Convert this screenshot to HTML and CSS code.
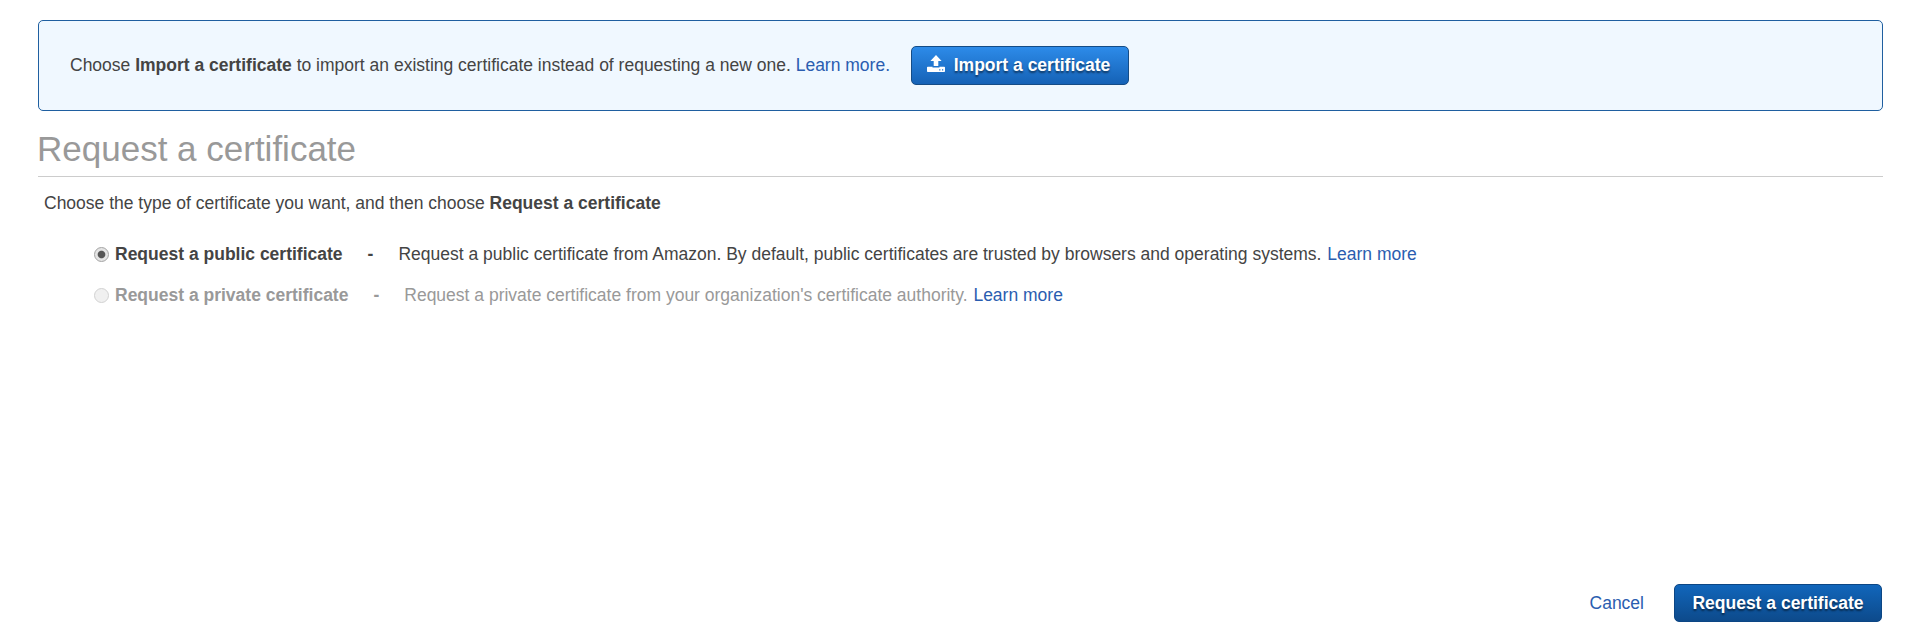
FILE: index.html
```html
<!DOCTYPE html>
<html lang="en">
<head>
<meta charset="utf-8">
<title>Request a certificate</title>
<link rel="stylesheet" href="styles.css">
</head>
<body>
<main class="page">
  <section class="notice">
    <p class="notice-text">Choose <b>Import a certificate</b> to import an existing certificate instead of requesting a new one. <a class="link" href="#">Learn more.</a></p>
    <button class="btn btn-import" type="button">
      <svg class="btn-icon" width="18" height="18" viewBox="0 0 18 18" aria-hidden="true">
        <path fill="#fff" d="M9 0L14.6 6H11.3V11H6.7V6H3.4Z"/>
        <path fill="#fff" fill-rule="evenodd" d="M.8 11.8H5.5V12.5H12.5V11.8H17.2Q18 11.8 18 12.6V16.2Q18 17 17.2 17H.8Q0 17 0 16.2V12.6Q0 11.8.8 11.8ZM12.2 14.3V15.5H13.4V14.3ZM15 14.3V15.5H16.2V14.3Z"/>
      </svg>
      <span>Import a certificate</span>
    </button>
  </section>
  <h1 class="title">Request a certificate</h1>
  <p class="intro">Choose the type of certificate you want, and then choose <b>Request a certificate</b></p>
  <div class="options">
    <div class="option">
      <span class="radio radio-on" role="radio" aria-checked="true"></span>
      <b class="option-name">Request a public certificate</b>
      <b class="dash">-</b>
      <span>Request a public certificate from Amazon. By default, public certificates are trusted by browsers and operating systems. <a class="link link-spaced" href="#">Learn more</a></span>
    </div>
    <div class="option option-disabled">
      <span class="radio radio-off" role="radio" aria-checked="false"></span>
      <b class="option-name">Request a private certificate</b>
      <b class="dash">-</b>
      <span>Request a private certificate from your organization's certificate authority. <a class="link link-spaced" href="#">Learn more</a></span>
    </div>
  </div>
  <footer class="actions">
    <a class="link" href="#">Cancel</a>
    <button class="btn btn-request" type="button">Request a certificate</button>
  </footer>
</main>
</body>
</html>
```
FILE: styles.css
```css
* { box-sizing: border-box; }
body {
  margin: 0;
  background: #fff;
  color: #444;
  font: 17.5px/25px "Liberation Sans", Arial, sans-serif;
}
.page {
  display: flex;
  flex-direction: column;
  height: 642px;
  padding: 20px 22px 20px 38px;
}
.link { color: #2a5db0; text-decoration: none; }
.notice {
  display: flex;
  align-items: center;
  gap: 21px;
  height: 91px;
  padding: 0 31px;
  border: 1px solid #1f5fa0;
  border-radius: 5px;
  background: #f0f8ff;
}
.notice-text { margin: 0; }
.btn {
  display: flex;
  align-items: center;
  justify-content: center;
  padding: 0;
  border-radius: 5px;
  color: #fff;
  font: bold 17.5px/25px "Liberation Sans", Arial, sans-serif;
  text-shadow: 0 2px 2px rgba(0, 0, 0, 0.5);
}
.btn-import {
  gap: 9px;
  width: 218px;
  height: 39px;
  padding-right: 3px;
  border: 1px solid #154c86;
  background: linear-gradient(#2d8be9, #1562b6);
}
.btn-icon { flex: none; margin-top: -3px; }
.btn-request {
  width: 208px;
  height: 38px;
  border: 1px solid #0c4684;
  background: linear-gradient(#1166bb, #0d4a8b);
}
.title {
  height: 66px;
  margin: 0;
  padding-top: 18px;
  border-bottom: 1px solid #ccc;
  color: #999;
  font-size: 35px;
  font-weight: normal;
  line-height: 40px;
  text-indent: -1px;
}
.intro { margin: 14px 0 0 6px; }
.options {
  display: grid;
  gap: 16px;
  margin: 26px 0 0 56px;
}
.option { display: flex; align-items: center; }
.option-disabled { color: #999; }
.radio {
  width: 15px;
  height: 15px;
  margin-right: 6px;
  border: 1px solid #a3a3a3;
  border-radius: 50%;
}
.radio-on { background: radial-gradient(circle, #555 0 3.3px, #e4e4e4 4.3px); }
.radio-off { border-color: #d2d2d2; background: #f0f0f0; }
.dash { margin: 0 25px; font-weight: bold; }
.link-spaced { margin-left: 1px; }
.actions {
  display: flex;
  align-items: center;
  justify-content: flex-end;
  gap: 30px;
  margin-top: auto;
  padding-right: 1px;
}
```
